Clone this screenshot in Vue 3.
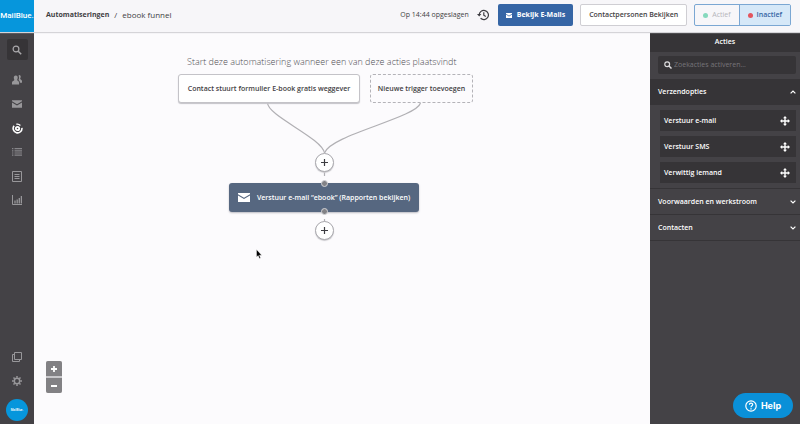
<script setup>
import { ref } from 'vue'

const status = ref('inactive')
const query = ref('')
const actions = ['Verstuur e-mail', 'Verstuur SMS', 'Verwittig iemand']
const sections = ['Voorwaarden en werkstroom', 'Contacten']
</script>

<template>
  <div class="app">
    <header class="topbar">
      <a class="brand" href="#">MailBlue.</a>
      <nav class="crumbs" aria-label="Kruimelpad">
        <a class="crumb-root" href="#">Automatiseringen</a>
        <span>/</span>
        <span>ebook funnel</span>
      </nav>
      <div class="tools">
        <span class="saved">Op 14:44 opgeslagen</span>
        <button class="history" aria-label="Geschiedenis">
          <svg width="12" height="12" viewBox="0 0 12 12" fill="none" stroke="#3d3d42" stroke-width="1.2">
            <path d="M2.2 6A4.6 4.6 0 1 1 3.6 9.3" />
            <path d="M0 5h4.4L2.2 7.6z" fill="#3d3d42" stroke="none" />
            <path d="M6.8 3.2v3l2 1.3" />
          </svg>
        </button>
        <button class="btn primary">
          <svg width="6" height="5" viewBox="0 0 6 5"><path d="M0 0h6v.8L3 2.8 0 .8zM0 1.6l3 2 3-2V5H0z" fill="#fff" /></svg>
          Bekijk E-Mails
        </button>
        <button class="btn outline">Contactpersonen Bekijken</button>
        <div class="toggle">
          <button class="state" :class="{ on: status === 'active' }" @click="status = 'active'"><i class="dot green"></i>Actief</button>
          <button class="state" :class="{ on: status === 'inactive' }" @click="status = 'inactive'"><i class="dot red"></i>Inactief</button>
        </div>
      </div>
    </header>

    <div class="body">
      <nav class="rail" aria-label="Hoofdmenu">
        <a class="rail-item search" href="#" aria-label="Zoeken">
          <svg width="10" height="10" viewBox="0 0 10 10" fill="none" stroke="#a9a8ab" stroke-width="1.2"><circle cx="4" cy="4" r="2.9" /><path d="M6.2 6.2l3 3" stroke-width="1.5" /></svg>
        </a>
        <a class="rail-item" href="#" aria-label="Contacten">
          <svg width="10" height="10" viewBox="0 0 10 10" fill="#98979a"><path d="M3.8.6c1.5 0 2.100 1.200 1.900 2.500-.1.900-.5 1.300-.5 1.800 0 .8 1.900 1 1.900 2.500v2H0v-2c0-1.500 2.300-1.700 2.300-2.500 0-.5-.4-.9-.5-1.800C1.700 1.700 2.300.6 3.800.6z" /><path d="M7.200 0c1.300 0 1.700 1 1.500 2.100-.1.900-.5 1.200-.5 1.700 0 .7 1.800.9 1.800 2.200v1.800H7.900c0-1.500-.6-2.200-1.500-2.800.6-.9 1-3 .1-4.300z" /></svg>
        </a>
        <a class="rail-item" href="#" aria-label="Campagnes">
          <svg width="10" height="8" viewBox="0 0 10 8" fill="#98979a"><path d="M0 .3h10v1L5 4.300 0 1.300zM0 2.400l5 3 5-3v5.300H0z" /></svg>
        </a>
        <a class="rail-item" href="#" aria-label="Automatiseringen">
          <svg width="11" height="11" viewBox="0 0 11 11" fill="none" stroke="#fff"><circle cx="5.500" cy="5.500" r="1.700" stroke-width="1.800" /><path d="M9.900 4.800A4.400 4.400 0 1 1 2.100 2.700" stroke-width="1.600" /><path d="M4.400 1.200a4.400 4.400 0 0 1 4 1.200" stroke-width="1.400" /></svg>
        </a>
        <a class="rail-item" href="#" aria-label="Lijsten">
          <svg width="10" height="8" viewBox="0 0 10 8" fill="#87868a"><path d="M0 0h1.400v1.200H0zM2.500 0H10v1.200H2.500zM0 2.200h1.400v1.200H0zM2.500 2.200H10v1.200H2.500zM0 4.400h1.400v1.200H0zM2.500 4.400H10v1.200H2.500zM0 6.600h1.400v1.200H0zM2.500 6.600H10v1.200H2.500z" /></svg>
        </a>
        <a class="rail-item" href="#" aria-label="Formulieren">
          <svg width="10" height="11" viewBox="0 0 10 11" fill="none" stroke="#98979a"><path d="M.5.500h9v10h-9zM2.500 3.500h5M2.500 5.500h5M2.500 7.500h5" /></svg>
        </a>
        <a class="rail-item" href="#" aria-label="Rapporten">
          <svg width="10" height="10" viewBox="0 0 10 10" fill="none" stroke="#98979a"><path d="M.5 0v9.500H10" /><path d="M3 8.500v-3M5.200 8.500v-4M7.300 8.500V3M9.400 8.500V1" stroke-width="1.300" /></svg>
        </a>
        <a class="rail-item low" href="#" aria-label="Sites">
          <svg width="10" height="10" viewBox="0 0 10 10" fill="none" stroke="#98979a"><path d="M2.500.500h7v7h-7zM2.500 2.500h-2v7h7v-2" /></svg>
        </a>
        <a class="rail-item" href="#" aria-label="Instellingen">
          <svg width="10" height="10" viewBox="0 0 10 10" fill="none" stroke="#98979a"><circle cx="5" cy="5" r="2.700" stroke-width="1.500" /><path d="M5 0v1.800M5 8.200V10M0 5h1.800M8.200 5H10M1.500 1.500l1.200 1.200M7.300 7.300l1.200 1.200M8.500 1.500L7.300 2.700M2.700 7.300L1.500 8.500" stroke-width="1.500" /></svg>
        </a>
        <a class="avatar" href="#">MailBlue.</a>
      </nav>

      <main class="canvas">
        <h1 class="intro">Start deze automatisering wanneer een van deze acties plaatsvindt</h1>
        <svg class="wires" width="480" height="200" viewBox="0 0 480 200" fill="none" stroke="#b1b0b4" stroke-width="1.200">
          <path d="M233.500 71C234 84 288 106 290.500 121" />
          <path d="M386.500 71C382 86 296 103 290.500 121" />
          <path d="M290.500 139v5M290.500 187v4" />
        </svg>
        <button class="node trigger">Contact stuurt formulier E-book gratis weggever</button>
        <button class="node add-trigger">Nieuwe trigger toevoegen</button>
        <button class="plus first" aria-label="Actie toevoegen">
          <svg width="7" height="7" viewBox="0 0 7 7" stroke="#3d3d42" stroke-width="1.200"><path d="M3.500 0v7M0 3.500h7" /></svg>
        </button>
        <button class="node step">
          <svg width="12" height="9" viewBox="0 0 12 9" fill="#fff"><path d="M0 0h12v1.300L6 4.700 0 1.300zM0 2.500l6 3.400 6-3.400V9H0z" /></svg>
          Verstuur e-mail “ebook” (Rapporten bekijken)
        </button>
        <i class="port upper"></i>
        <i class="port lower"></i>
        <button class="plus second" aria-label="Actie toevoegen">
          <svg width="7" height="7" viewBox="0 0 7 7" stroke="#3d3d42" stroke-width="1.200"><path d="M3.500 0v7M0 3.500h7" /></svg>
        </button>
        <div class="zoomer">
          <button aria-label="Inzoomen"><svg width="6" height="6" viewBox="0 0 6 6" stroke="#fff" stroke-width="1.800"><path d="M3 0v6M0 3h6" /></svg></button>
          <button aria-label="Uitzoomen"><svg width="6" height="6" viewBox="0 0 6 6" stroke="#fff" stroke-width="1.800"><path d="M0 3h6" /></svg></button>
        </div>
        <svg class="cursor" width="7" height="10" viewBox="0 0 7 10"><path d="M.5.500v7.600l1.700-1.500 1.200 2.900 1.200-.5-1.200-2.800h2.300z" fill="#000" stroke="#fff" stroke-width=".4" /></svg>
      </main>

      <aside class="panel">
        <h2 class="panel-title">Acties</h2>
        <div class="search-area">
          <label class="search-box">
            <svg width="8" height="8" viewBox="0 0 8 8" fill="none" stroke="#dddcde"><circle cx="3.200" cy="3.200" r="2.400" stroke-width="1.200" /><path d="M5 5l2.500 2.500" stroke-width="1.500" /></svg>
            <input v-model="query" type="text" aria-label="Zoekacties activeren" placeholder="Zoekacties activeren...">
          </label>
        </div>
        <button class="section open">
          Verzendopties
          <svg width="6" height="4" viewBox="0 0 6 4" fill="none" stroke="#fff" stroke-width="1.200"><path d="M.6 3.400L3 1l2.400 2.400" /></svg>
        </button>
        <ul class="actions">
          <li v-for="name in actions" :key="name">
            <button class="action">
              {{ name }}
              <svg width="10" height="10" viewBox="0 0 10 10" fill="#fff"><path d="M5 0l2 2.200H5.700v2.100h2.100V3L10 5 7.800 7V5.700H5.700v2.100H7L5 10 3 7.800h1.300V5.700H2.200V7L0 5l2.200-2v1.300h2.100V2.200H3z" /></svg>
            </button>
          </li>
        </ul>
        <button v-for="name in sections" :key="name" class="section">
          {{ name }}
          <svg width="6" height="4" viewBox="0 0 6 4" fill="none" stroke="#fff" stroke-width="1.200"><path d="M.6.600L3 3 5.400.600" /></svg>
        </button>
      </aside>
    </div>

    <button class="help">
      <svg width="12" height="12" viewBox="0 0 12 12" fill="none" stroke="#fff"><circle cx="6" cy="6" r="5.200" stroke-width="1.200" /><path d="M4.400 4.800c0-2.200 3.300-2.200 3.300-.2C7.700 5.800 6 5.800 6 7.200" stroke-width="1.200" /><path d="M6 8.200v1.200" stroke-width="1.300" /></svg>
      Help
    </button>
  </div>
</template>

<style>
body {
  margin: 0;
}
</style>

<style scoped>
.app {
  display: flex;
  flex-direction: column;
  min-height: 100vh;
  font-family: "Open Sans", "Noto Sans", sans-serif;
  font-size: 7px;
  line-height: 12px;
  color: #3f3e43;
  background: #fcfbfd;
}
* {
  box-sizing: border-box;
}
button,
input {
  font: inherit;
  color: inherit;
  margin: 0;
  padding: 0;
  border: 0;
  background: none;
}
button {
  cursor: pointer;
  white-space: nowrap;
}
a {
  color: inherit;
  text-decoration: none;
}
svg {
  display: block;
  flex: none;
}
.topbar {
  display: flex;
  align-items: center;
  height: 32px;
  padding-bottom: 2px;
  background: #f7f6f9;
  box-shadow: 0 1px 1px #d5d4d8;
  position: relative;
  z-index: 1;
}
.brand {
  align-self: stretch;
  display: flex;
  align-items: center;
  justify-content: center;
  width: 34px;
  margin-bottom: -2px;
  overflow: hidden;
  background: #0696dc;
  color: #fff;
  font: 500 8px/12px Roboto, sans-serif;
}
.crumbs {
  display: flex;
  gap: 5px;
  padding: 0 12px;
  font-size: 8px;
}
.crumb-root {
  font-size: 7px;
  font-weight: 700;
}
.tools {
  display: flex;
  align-items: center;
  margin-left: auto;
  padding-right: 9px;
}
.history {
  margin: 0 9px 0 8px;
}
.btn {
  display: flex;
  align-items: center;
  justify-content: center;
  gap: 5px;
  height: 22px;
  padding: 0 8px;
  border-radius: 2px;
  font-weight: 600;
}
.primary {
  background: #3565a5;
  color: #fff;
  font-weight: 700;
}
.outline {
  margin: 0 7px;
  border: 1px solid #cfced3;
  background: #fff;
}
.toggle {
  display: flex;
  height: 22px;
  border: 1px solid #7ba7d3;
  border-radius: 2px;
  overflow: hidden;
}
.state {
  display: flex;
  align-items: center;
  gap: 4px;
  padding: 0 8px;
  color: #b5b5ba;
}
.state + .state {
  border-left: 1px solid #7ba7d3;
}
.state.on {
  background: #d6e8f8;
  color: #3565a5;
  font-weight: 600;
}
.dot {
  width: 5px;
  height: 5px;
  border-radius: 50%;
}
.green {
  background: #86d9bd;
}
.red {
  background: #e4555e;
}
.body {
  flex: 1;
  display: flex;
}
.rail {
  display: flex;
  flex-direction: column;
  align-items: center;
  width: 34px;
  padding: 7px 0 3px;
  background: #444246;
}
.rail-item {
  display: flex;
  align-items: center;
  justify-content: center;
  width: 21px;
  height: 24px;
}
.search {
  height: 21px;
  margin-bottom: 8px;
  border-radius: 2px;
  background: #363437;
}
.low {
  margin-top: auto;
}
.avatar {
  display: flex;
  align-items: center;
  justify-content: center;
  width: 22px;
  height: 22px;
  margin-top: 6px;
  border-radius: 50%;
  background: #0696dc;
  color: #fff;
  font: 500 3px/4px Roboto, sans-serif;
}
.canvas {
  flex: 1;
  position: relative;
  background: #fcfbfd;
}
.intro {
  position: absolute;
  left: 153px;
  top: 22px;
  margin: 0;
  font-size: 9px;
  line-height: 16px;
  font-weight: 300;
  color: #4f4e53;
  white-space: nowrap;
}
.wires {
  position: absolute;
  left: 0;
  top: 0;
}
.node {
  position: absolute;
  display: flex;
  align-items: center;
  justify-content: center;
  height: 29px;
  border-radius: 3px;
  font-weight: 600;
}
.trigger {
  left: 144px;
  top: 42px;
  width: 182px;
  border: 1px solid #c4c3c8;
  background: #fff;
  box-shadow: 0 1px 1px #c4c3c8;
}
.add-trigger {
  left: 336px;
  top: 42px;
  width: 103px;
  border: 1px dashed #b4b3b8;
}
.step {
  left: 195px;
  top: 151px;
  width: 190px;
  gap: 7px;
  background: #566780;
  color: #fff;
  box-shadow: 0 1px 2px #bcbbc2;
}
.plus {
  position: absolute;
  left: 281px;
  display: flex;
  align-items: center;
  justify-content: center;
  width: 19px;
  height: 19px;
  border: 1px solid #a9a8ad;
  border-radius: 50%;
  background: #fff;
  box-shadow: 0 1px 1px #c9c8cd;
}
.first {
  top: 121px;
}
.second {
  top: 189px;
}
.port {
  position: absolute;
  left: 287px;
  width: 7px;
  height: 7px;
  border: 1px solid #d3d3d6;
  border-radius: 50%;
  background: #828286;
}
.upper {
  top: 148px;
}
.lower {
  top: 176px;
}
.zoomer {
  position: absolute;
  left: 12px;
  bottom: 31px;
  display: grid;
  gap: 2px;
  border-radius: 2px;
  overflow: hidden;
  background: #c9c8cb;
}
.zoomer button {
  display: grid;
  place-items: center;
  width: 16px;
  height: 15px;
  background: #828184;
}
.cursor {
  position: absolute;
  left: 222px;
  top: 217px;
}
.panel {
  width: 150px;
  background: #444246;
  color: #fff;
  font-weight: 600;
}
.panel-title {
  margin: 0;
  padding: 4px 0;
  font-size: 7px;
  line-height: 12px;
  font-weight: 600;
  text-align: center;
  background: #363437;
}
.search-area {
  padding: 4px 4px 5px 8px;
}
.search-box {
  display: flex;
  align-items: center;
  gap: 2px;
  height: 18px;
  padding: 0 6px;
  border-radius: 2px;
  background: #363437;
}
.search-box input {
  flex: 1;
  min-width: 0;
  font-weight: 400;
  outline: 0;
}
.search-box input::placeholder {
  color: #77757a;
  opacity: 1;
}
.section {
  display: flex;
  align-items: center;
  justify-content: space-between;
  width: 100%;
  height: 26px;
  padding: 0 4px 0 8px;
  border-bottom: 1px solid #363437;
}
.open {
  background: #363437;
}
.actions {
  display: grid;
  gap: 5px;
  margin: 0;
  padding: 5px 4px 5px 10px;
  list-style: none;
  border-bottom: 1px solid #363437;
}
.action {
  display: flex;
  align-items: center;
  justify-content: space-between;
  width: 100%;
  height: 21px;
  padding: 0 6px 0 4px;
  background: #363437;
}
.help {
  position: fixed;
  right: 7px;
  bottom: 6px;
  z-index: 2;
  display: flex;
  align-items: center;
  justify-content: center;
  gap: 4px;
  width: 60px;
  height: 25px;
  border-radius: 13px;
  background: #0a90d8;
  color: #fff;
  font-family: Inter, sans-serif;
  font-size: 9px;
  font-weight: 700;
}
</style>
